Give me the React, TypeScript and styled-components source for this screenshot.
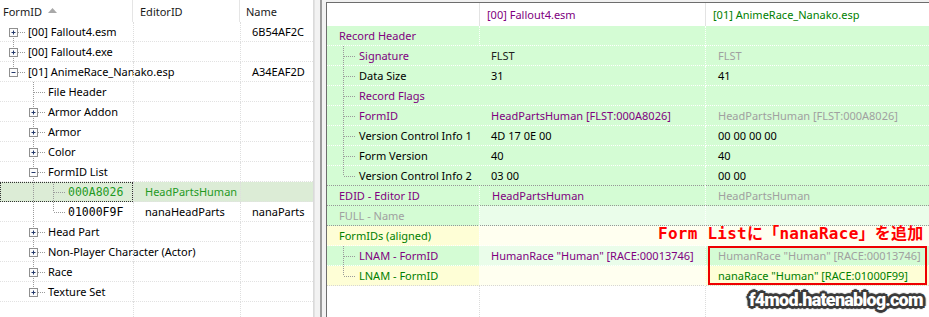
import React from 'react';
import styled, { createGlobalStyle } from 'styled-components';

const GlobalStyle = createGlobalStyle`
  html, body {
    margin: 0;
    padding: 0;
    background: #ffffff;
  }
  body {
    font-family: "Noto Sans", "Noto Sans CJK JP", sans-serif;
    font-size: 11px;
    color: #000;
  }
`;

const PURPLE = '#800080';
const GREEN = '#008000';
const GRAY = '#a0a0a0';
const INK = '#000000';

const G = '#d4fcd4';
const LG = '#eafdea';
const Y = '#fefed6';
const LY = '#fffff0';

const dotLine = (c: string) =>
  `linear-gradient(to right, ${c} 50%, transparent 50%) left bottom / 2px 1px repeat-x`;

const Root = styled.div`
  position: relative;
  display: flex;
  width: 929px;
  height: 317px;
  overflow: hidden;
  background: #f0f0f0;
`;

/* ---------- left tree ---------- */

const LeftPanel = styled.div`
  flex: none;
  width: 313px;
  display: flex;
  flex-direction: column;
  background: #fff;
  border-right: 1px solid #dadada;
`;

const LeftGrid = styled.div`
  display: grid;
  grid-template-columns: 133px 107px 73px;
`;

const LeftHeader = styled(LeftGrid)`
  height: 22px;
`;

const HeaderCell = styled.div<{ $pad: number; $edge?: boolean }>`
  display: flex;
  align-items: center;
  padding-left: ${p => p.$pad}px;
  border-right: ${p => (p.$edge ? '1px solid #e5e5e5' : 'none')};
  color: #1a1a1a;
  white-space: nowrap;
`;

const SortArrow = styled.svg`
  margin-left: 6px;
  margin-top: -2px;
`;

const TreeRow = styled(LeftGrid)<{ $sel?: boolean }>`
  height: 20px;
  line-height: 20px;
  background: ${p => dotLine('#e2e2e2')}, ${p => (p.$sel ? '#dcecd6' : '#fff')};
  color: ${p => (p.$sel ? '#1f9a1f' : INK)};
`;

const NodeCell = styled.div<{ $sel?: boolean }>`
  display: flex;
  align-items: stretch;
  padding-left: 3px;
  white-space: nowrap;
  outline: ${p => (p.$sel ? '1px dotted #333' : 'none')};
  outline-offset: -1px;
`;

const NodeText = styled.span<{ $mono?: boolean }>`
  margin-left: 1px;
  font-family: ${p => (p.$mono ? '"DejaVu Sans Mono", monospace' : 'inherit')};
  font-size: ${p => (p.$mono ? '11.5px' : '11px')};
`;

const ValueCell = styled.div`
  padding-left: 11px;
  border-left: 1px dotted #dedede;
  white-space: nowrap;
  overflow: hidden;
`;

const LeftFiller = styled(LeftGrid)`
  flex: 1;
  & > div + div {
    border-left: 1px dotted #dedede;
  }
`;

/* ---------- splitter ---------- */

const Splitter = styled.div`
  flex: none;
  width: 12px;
  display: flex;
  justify-content: center;
  background: #f2f2f2;
  border-left: 1px solid #e2e2e2;
  box-sizing: border-box;
`;

const SplitterBar = styled.div`
  width: 2px;
  margin-left: 1px;
  background: #9c9c9c;
`;

/* ---------- right record view ---------- */

const RightPanel = styled.div`
  flex: 1;
  display: flex;
  flex-direction: column;
  margin-top: 2px;
  background: #fff;
  border-top: 1px solid #6d6d6d;
  border-left: 1px solid #6d6d6d;
`;

const RightGrid = styled.div`
  display: grid;
  grid-template-columns: 152px 226px 1fr;
`;

const RightHeader = styled(RightGrid)`
  height: 23px;
  line-height: 23px;
`;

const RHeadCell = styled.div<{ $color?: string }>`
  padding-left: 7px;
  color: ${p => p.$color || INK};
  white-space: nowrap;
  & + & {
    border-left: 1px solid #e3e3e3;
  }
`;

const RecRow = styled(RightGrid)`
  height: 20px;
  line-height: 20px;
`;

const RecCell = styled.div<{ $bg: string; $sep: string; $color?: string }>`
  display: flex;
  align-items: stretch;
  padding-left: 12px;
  background: ${p => dotLine(p.$sep)}, ${p => p.$bg};
  color: ${p => p.$color || INK};
  white-space: nowrap;
  overflow: hidden;
  & + & {
    border-left: 1px dotted rgba(255, 255, 255, 0.95);
  }
`;

const ChildLabel = styled.div<{ $bg: string; $sep: string; $color: string }>`
  display: flex;
  align-items: stretch;
  padding-left: 6px;
  background: ${p => dotLine(p.$sep)}, ${p => p.$bg};
  color: ${p => p.$color};
  white-space: nowrap;
  & > span {
    margin-left: 2px;
  }
`;

const RightFiller = styled(RightGrid)`
  flex: 1;
  & > div + div {
    border-left: 1px dotted #dcdcdc;
  }
`;

/* ---------- overlays ---------- */

const Note = styled.div`
  position: absolute;
  left: 658px;
  top: 224px;
  font-family: "DejaVu Sans Mono", "Noto Sans CJK JP", monospace;
  font-weight: bold;
  font-size: 16px;
  line-height: 20px;
  letter-spacing: 0.25px;
  color: #ff0000;
  white-space: nowrap;
`;

const RedBox = styled.div`
  position: absolute;
  left: 708px;
  top: 246px;
  width: 219px;
  height: 39px;
  box-sizing: border-box;
  border: 2px solid #ee0000;
`;

const Watermark = styled.div`
  position: absolute;
  left: 749px;
  top: 288px;
  font-family: Roboto, "Liberation Sans", sans-serif;
  font-weight: 900;
  font-size: 18px;
  line-height: 24px;
  letter-spacing: -0.8px;
  color: #fff;
  text-shadow:
    2px 0 0 #3a3a3a, -2px 0 0 #3a3a3a, 0 2px 0 #3a3a3a, 0 -2px 0 #3a3a3a,
    2px 2px 0 #3a3a3a, -2px -2px 0 #3a3a3a, 2px -2px 0 #3a3a3a, -2px 2px 0 #3a3a3a,
    3px 0 1px #3a3a3a, -3px 0 1px #3a3a3a, 0 3px 1px #3a3a3a, 0 -3px 1px #3a3a3a;
`;

/* ---------- tree connector drawing ---------- */

type GuideProps = {
  width: number;
  up?: boolean;
  down?: boolean;
  across?: boolean;
  box?: 'plus' | 'minus';
};

function Guide({ width, up, down, across, box }: GuideProps) {
  const line = { stroke: '#9a9a9a', strokeDasharray: '1 1', strokeWidth: 1 };
  return (
    <svg width={width} height="20" viewBox={`0 0 ${width} 20`} style={{ flex: 'none' }}>
      {up && <line x1="10.5" y1="0" x2="10.5" y2="10" {...line} />}
      {down && <line x1="10.5" y1="10" x2="10.5" y2="20" {...line} />}
      {across && <line x1={box ? 15 : 11} y1="10.5" x2={width - 1} y2="10.5" {...line} />}
      {box && (
        <g>
          <rect x="6.5" y="6.5" width="8" height="8" fill="#fcfcfc" stroke="#8f8f8f" />
          <line x1="8.5" y1="10.5" x2="12.5" y2="10.5" stroke="#23386b" />
          {box === 'plus' && <line x1="10.5" y1="8.5" x2="10.5" y2="12.5" stroke="#23386b" />}
        </g>
      )}
    </svg>
  );
}

/* ---------- data ---------- */

type TreeNode = {
  depth: number;
  text: string;
  box?: 'plus' | 'minus';
  guides: boolean[];
  first?: boolean;
  last?: boolean;
  mono?: boolean;
  editor?: string;
  name?: string;
  selected?: boolean;
};

const treeNodes: TreeNode[] = [
  { depth: 0, text: '[00] Fallout4.esm', box: 'plus', guides: [], first: true, name: '6B54AF2C' },
  { depth: 0, text: '[00] Fallout4.exe', box: 'plus', guides: [] },
  { depth: 0, text: '[01] AnimeRace_Nanako.esp', box: 'minus', guides: [], last: true, name: 'A34EAF2D' },
  { depth: 1, text: 'File Header', guides: [false] },
  { depth: 1, text: 'Armor Addon', box: 'plus', guides: [false] },
  { depth: 1, text: 'Armor', box: 'plus', guides: [false] },
  { depth: 1, text: 'Color', box: 'plus', guides: [false] },
  { depth: 1, text: 'FormID List', box: 'minus', guides: [false] },
  { depth: 2, text: '000A8026', mono: true, guides: [false, true], editor: 'HeadPartsHuman', selected: true },
  { depth: 2, text: '01000F9F', mono: true, guides: [false, true], last: true, editor: 'nanaHeadParts', name: 'nanaParts' },
  { depth: 1, text: 'Head Part', box: 'plus', guides: [false] },
  { depth: 1, text: 'Non-Player Character (Actor)', box: 'plus', guides: [false] },
  { depth: 1, text: 'Race', box: 'plus', guides: [false] },
  { depth: 1, text: 'Texture Set', box: 'plus', guides: [false], last: true },
];

type RecordRow = {
  label: string;
  depth: 0 | 1;
  last?: boolean;
  lc: string;
  v2?: string;
  c2?: string;
  v3?: string;
  c3?: string;
  bg: [string, string, string];
};

const recordRows: RecordRow[] = [
  { label: 'Record Header', depth: 0, lc: PURPLE, bg: [G, G, G] },
  { label: 'Signature', depth: 1, lc: PURPLE, v2: 'FLST', c2: '#202020', v3: 'FLST', c3: GRAY, bg: [G, G, G] },
  { label: 'Data Size', depth: 1, lc: INK, v2: '31', v3: '41', bg: [G, G, G] },
  { label: 'Record Flags', depth: 1, lc: PURPLE, bg: [G, G, G] },
  { label: 'FormID', depth: 1, lc: PURPLE, v2: 'HeadPartsHuman [FLST:000A8026]', c2: PURPLE, v3: 'HeadPartsHuman [FLST:000A8026]', c3: GRAY, bg: [G, G, G] },
  { label: 'Version Control Info 1', depth: 1, lc: INK, v2: '4D 17 0E 00', v3: '00 00 00 00', bg: [G, G, G] },
  { label: 'Form Version', depth: 1, lc: INK, v2: '40', v3: '40', bg: [G, G, G] },
  { label: 'Version Control Info 2', depth: 1, last: true, lc: INK, v2: '03 00', v3: '00 00', bg: [G, G, G] },
  { label: 'EDID - Editor ID', depth: 0, lc: PURPLE, v2: 'HeadPartsHuman', c2: PURPLE, v3: 'HeadPartsHuman', c3: GRAY, bg: [G, G, G] },
  { label: 'FULL - Name', depth: 0, lc: GRAY, bg: [G, LG, LG] },
  { label: 'FormIDs (aligned)', depth: 0, lc: GREEN, bg: [Y, LY, LY] },
  { label: 'LNAM - FormID', depth: 1, lc: PURPLE, v2: 'HumanRace "Human" [RACE:00013746]', c2: PURPLE, v3: 'HumanRace "Human" [RACE:00013746]', c3: GRAY, bg: [G, LG, G] },
  { label: 'LNAM - FormID', depth: 1, last: true, lc: GREEN, v3: 'nanaRace "Human" [RACE:01000F99]', c3: GREEN, bg: [Y, LY, Y] },
];

function sepFor(i: number) {
  const next = recordRows[i + 1];
  if (!next) return '#d6d6d6';
  return next.depth === 0 ? '#979797' : '#ffffff';
}

export default function App() {
  return (
    <Root>
      <GlobalStyle />

      <LeftPanel>
        <LeftHeader>
          <HeaderCell $pad={3} $edge>
            FormID
            <SortArrow width="9" height="5" viewBox="0 0 9 5">
              <path d="M0 5 L4.5 0 L9 5 Z" fill="#a8a8a8" />
            </SortArrow>
          </HeaderCell>
          <HeaderCell $pad={7} $edge>EditorID</HeaderCell>
          <HeaderCell $pad={6}>Name</HeaderCell>
        </LeftHeader>

        {treeNodes.map((n, i) => (
          <TreeRow key={i} $sel={n.selected}>
            <NodeCell $sel={n.selected}>
              {n.guides.map((g, k) => (
                <Guide key={k} width={20} up={g} down={g} />
              ))}
              <Guide width={24} up={!n.first} down={!n.last} across box={n.box} />
              <NodeText $mono={n.mono}>{n.text}</NodeText>
            </NodeCell>
            <ValueCell>{n.editor}</ValueCell>
            <ValueCell>{n.name}</ValueCell>
          </TreeRow>
        ))}

        <LeftFiller>
          <div />
          <div />
          <div />
        </LeftFiller>
      </LeftPanel>

      <Splitter>
        <SplitterBar />
      </Splitter>

      <RightPanel>
        <RightHeader>
          <RHeadCell />
          <RHeadCell $color={PURPLE}>[00] Fallout4.esm</RHeadCell>
          <RHeadCell $color={GREEN}>[01] AnimeRace_Nanako.esp</RHeadCell>
        </RightHeader>

        {recordRows.map((r, i) => {
          const sep = sepFor(i);
          return (
            <RecRow key={i}>
              {r.depth === 0 ? (
                <RecCell $bg={r.bg[0]} $sep={sep} $color={r.lc}>
                  {r.label}
                </RecCell>
              ) : (
                <ChildLabel $bg={r.bg[0]} $sep={sep} $color={r.lc}>
                  <Guide width={24} up down={!r.last} across />
                  <span>{r.label}</span>
                </ChildLabel>
              )}
              <RecCell $bg={r.bg[1]} $sep={sep} $color={r.c2}>
                {r.v2}
              </RecCell>
              <RecCell $bg={r.bg[2]} $sep={sep} $color={r.c3}>
                {r.v3}
              </RecCell>
            </RecRow>
          );
        })}

        <RightFiller>
          <div />
          <div />
          <div />
        </RightFiller>
      </RightPanel>

      <Note>Form Listに「nanaRace」を追加</Note>
      <RedBox />
      <Watermark>f4mod.hatenablog.com</Watermark>
    </Root>
  );
}
